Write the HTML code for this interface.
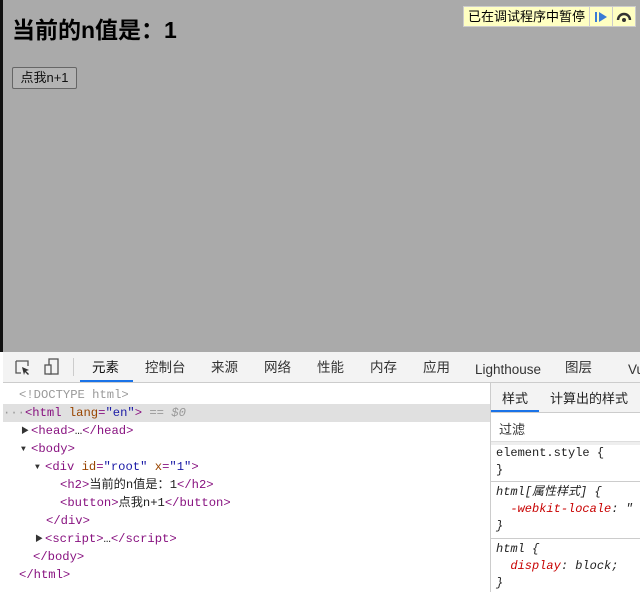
<!DOCTYPE html>
<html><head><meta charset="utf-8"><style>
*{margin:0;padding:0;box-sizing:border-box}
body{width:640px;height:592px;overflow:hidden;background:#fff;font-family:"Liberation Sans","Noto Sans CJK SC",sans-serif;position:relative}
.vp{position:absolute;left:0;top:0;width:640px;height:352px;background:#aaaaaa}
.lb{position:absolute;left:0;top:0;width:3px;height:352px;background:#111}
h2{position:absolute;left:12px;top:14px;font-size:23px;line-height:32px;font-weight:bold;color:#000}
.btn{position:absolute;left:12px;top:67px;width:65px;height:22px;border:1px solid #666;border-radius:2px;background:#b3b3b3;font-size:13px;line-height:20px;text-align:center;color:#111}
.pause{position:absolute;left:463px;top:6px;height:21px;background:#ffffc2;border:1px solid #ccc;font-size:13px;line-height:19px;display:flex}
.pause span{padding:0 4px}
.pause b{width:23px;border-left:1px solid #ccc;font-weight:normal;display:flex;align-items:center;justify-content:center}
.tb{position:absolute;left:3px;top:352px;width:637px;height:31px;background:#f3f3f3;border-bottom:1px solid #ccc;font-size:13.5px;color:#333}
.tb span{position:absolute;top:6px;line-height:20px;height:20px}
.el{position:absolute;left:3px;top:383px;width:487px;height:209px;font-family:"Liberation Mono","Noto Sans CJK SC",monospace;font-size:12.2px;color:#881280}
.ln{position:absolute;height:18px;line-height:18px;white-space:pre}
.a{color:#994500}.v{color:#1a1aa6}.g{color:#999}.t{color:#222}
.tri{font-size:8px;color:#333;display:inline-block;width:10px;vertical-align:1px}
.sp{position:absolute;left:490px;top:383px;width:150px;height:209px;border-left:1px solid #ccc;font-family:"Liberation Mono",monospace;font-size:12px;color:#222}
.sp .r{position:absolute;left:5px;white-space:pre;line-height:17px}
</style></head><body>
<div class="vp"></div><div class="lb"></div>
<h2>当前的n值是：1</h2>
<div class="btn">点我n+1</div>
<div class="pause"><span>已在调试程序中暂停</span><b><svg width="14" height="12"><rect x="1" y="1" width="2" height="10" fill="#3a7bd5"/><path d="M5 1 L13 6 L5 11Z" fill="#3a7bd5"/></svg></b><b><svg width="16" height="12"><path d="M2 9 A6 6 0 0 1 14 9" stroke="#333" stroke-width="2.4" fill="none"/><circle cx="8" cy="9" r="2" fill="#333"/></svg></b></div>
<div class="tb">
<svg style="position:absolute;left:11px;top:7px" width="18" height="18"><path d="M2 2h12v5M2 2v12h5" stroke="#555" fill="none" stroke-width="1.3"/><path d="M8 8l7 3-3 1 3 3-1 1-3-3-1 3z" fill="#333"/></svg>
<svg style="position:absolute;left:40px;top:6px" width="18" height="18"><rect x="6" y="1" width="9" height="15" stroke="#555" fill="none" stroke-width="1.3"/><rect x="2" y="7" width="6" height="9" stroke="#555" fill="#f3f3f3" stroke-width="1.3"/></svg>
<div style="position:absolute;left:70px;top:6px;width:1px;height:18px;background:#ccc"></div>
<span style="left:89px;color:#111">元素</span>
<div style="position:absolute;left:77px;top:28px;width:53px;height:2px;background:#1a73e8"></div>
<span style="left:142px">控制台</span><span style="left:208px">来源</span><span style="left:261px">网络</span><span style="left:314px">性能</span><span style="left:367px">内存</span><span style="left:420px">应用</span><span style="left:472px;top:8px">Lighthouse</span><span style="left:562px">图层</span><span style="left:625px;top:8px">Vu</span>
</div>
<div class="el">
<div class="ln g" style="top:3px;left:16px">&lt;!DOCTYPE html&gt;</div>
<div style="position:absolute;left:0;top:21px;width:487px;height:18px;background:#e0e0e0"></div>
<div class="ln" style="top:21px;left:0"><span class="g">···</span>&lt;html <span class="a">lang</span>=<span class="v">"en"</span>&gt; <span class="g"><i>== $0</i></span></div>
<div class="ln" style="top:39px;left:18px"><span class="tri">▶</span>&lt;head&gt;<span class="t">…</span>&lt;/head&gt;</div>
<div class="ln" style="top:57px;left:18px"><span class="tri">▼</span>&lt;body&gt;</div>
<div class="ln" style="top:75px;left:32px"><span class="tri">▼</span>&lt;div <span class="a">id</span>=<span class="v">"root"</span> <span class="a">x</span>=<span class="v">"1"</span>&gt;</div>
<div class="ln" style="top:93px;left:57px">&lt;h2&gt;<span class="t">当前的n值是：1</span>&lt;/h2&gt;</div>
<div class="ln" style="top:111px;left:57px">&lt;button&gt;<span class="t">点我n+1</span>&lt;/button&gt;</div>
<div class="ln" style="top:129px;left:43px">&lt;/div&gt;</div>
<div class="ln" style="top:147px;left:32px"><span class="tri">▶</span>&lt;script&gt;<span class="t">…</span>&lt;/script&gt;</div>
<div class="ln" style="top:165px;left:30px">&lt;/body&gt;</div>
<div class="ln" style="top:183px;left:16px">&lt;/html&gt;</div>
</div>
<div class="sp">
<div style="position:absolute;left:0;top:0;width:150px;height:30px;background:#f3f3f3;border-bottom:1px solid #ccc;font-family:'Liberation Sans','Noto Sans CJK SC',sans-serif;font-size:13px"><span style="position:absolute;left:11px;top:5px">样式</span><span style="position:absolute;left:59px;top:5px">计算出的样式</span><div style="position:absolute;left:0;top:27px;width:48px;height:2px;background:#1a73e8"></div></div>
<div style="position:absolute;left:8px;top:36px;font-family:'Liberation Sans','Noto Sans CJK SC',sans-serif;font-size:13px;color:#333">过滤</div>
<div style="position:absolute;left:0;top:58px;width:150px;height:4px;background:#eee;border-top:1px solid #ddd"></div>
<div class="r" style="top:62px">element.style {
}</div>
<div style="position:absolute;left:0;top:98px;width:150px;border-top:1px solid #ccc"></div>
<div class="r" style="top:101px;font-style:italic">html[属性样式] {
  <span style="color:#c80000">-webkit-locale</span>: "
}</div>
<div style="position:absolute;left:0;top:155px;width:150px;border-top:1px solid #ccc"></div>
<div class="r" style="top:158px;font-style:italic">html {
  <span style="color:#c80000">display</span>: block;
}</div>
</div>
</body></html>
